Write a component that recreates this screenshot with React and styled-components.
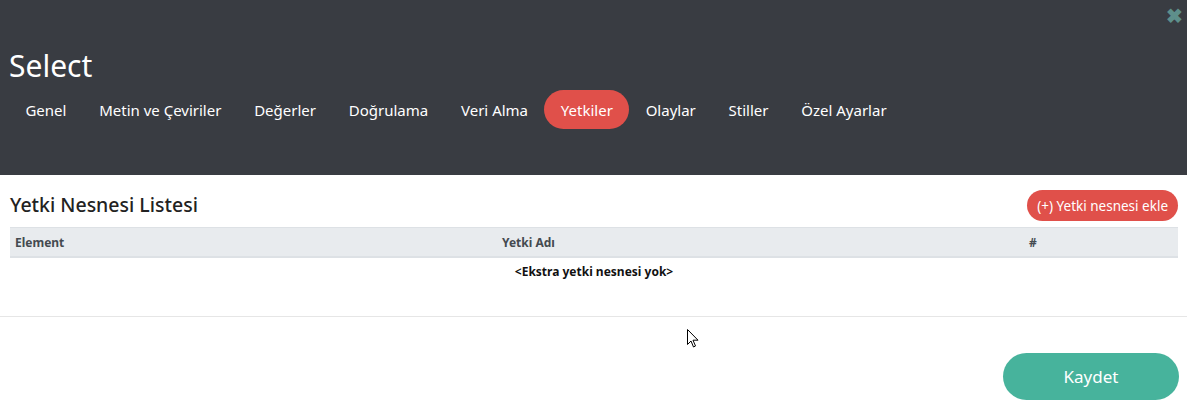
import styled, { createGlobalStyle } from "styled-components";

const Global = createGlobalStyle`
  html, body {
    margin: 0;
    padding: 0;
    background: #ffffff;
    font-family: "Noto Sans", "Open Sans", sans-serif;
  }
`;

const Page = styled.div`
  width: 1187px;
  height: 408px;
  display: flex;
  flex-direction: column;
  position: relative;
  overflow: hidden;
`;

const Header = styled.div`
  background-color: #393c42;
  height: 175px;
  box-sizing: border-box;
  padding: 46px 9px 0;
  position: relative;
`;

const Close = styled.span`
  position: absolute;
  top: 6px;
  right: 4px;
  color: #5e8f8b;
  font-size: 20px;
  font-weight: 700;
  line-height: 20px;
`;

const Title = styled.h1`
  margin: 0;
  color: #ffffff;
  font-weight: 400;
  font-size: 30px;
  line-height: 40px;
`;

const Tabs = styled.div`
  display: flex;
  margin-top: 4px;
`;

const Tab = styled.div`
  height: 39px;
  padding: 0 16.4px;
  display: flex;
  align-items: center;
  border-radius: 20px;
  font-size: 15px;
  color: #ffffff;
  background-color: ${(p) => (p.$active ? "#e0504a" : "transparent")};
`;

const Body = styled.div`
  padding: 17px 9px 0 10px;
  border-bottom: 1px solid #e6e6e6;
  height: 142px;
  box-sizing: border-box;
`;

const TopRow = styled.div`
  display: flex;
  justify-content: space-between;
  align-items: center;
  margin-bottom: 6px;
`;

const ListTitle = styled.h2`
  margin: 0 0 4px;
  font-size: 19.5px;
  font-weight: 500;
  color: #222;
  line-height: 24px;
`;

const AddButton = styled.button`
  border: none;
  background-color: #e0504a;
  color: #fff;
  border-radius: 16px;
  height: 31px;
  padding: 0 10px;
  font-family: inherit;
  font-size: 13.5px;
  margin-top: -2px;
`;

const Table = styled.table`
  width: 100%;
  border-collapse: collapse;
  table-layout: fixed;
  font-size: 12px;
`;

const Th = styled.th`
  text-align: left;
  background-color: #e8ebee;
  color: #444a50;
  font-weight: 700;
  height: 28px;
  padding: 0 5px;
  border-top: 1px solid #dde1e5;
  border-bottom: 2px solid #dde1e5;
  width: ${(p) => p.$w || "auto"};
`;

const Td = styled.td`
  text-align: center;
  font-weight: 700;
  color: #111;
  padding: 5px;
`;

const Footer = styled.div`
  display: flex;
  justify-content: flex-end;
  padding: 36px 8px 0;
`;

const SaveButton = styled.button`
  width: 176px;
  height: 47px;
  border: none;
  border-radius: 24px;
  background-color: #47b39c;
  color: #fff;
  font-family: inherit;
  font-size: 17px;
`;

const Cursor = styled.svg`
  position: absolute;
  left: 687px;
  top: 329px;
`;

const tabs = [
  "Genel",
  "Metin ve Çeviriler",
  "Değerler",
  "Doğrulama",
  "Veri Alma",
  "Yetkiler",
  "Olaylar",
  "Stiller",
  "Özel Ayarlar",
];

export default function App() {
  return (
    <Page>
      <Global />
      <Header>
        <Close>✖</Close>
        <Title>Select</Title>
        <Tabs>
          {tabs.map((t) => (
            <Tab key={t} $active={t === "Yetkiler"}>
              {t}
            </Tab>
          ))}
        </Tabs>
      </Header>
      <Body>
        <TopRow>
          <ListTitle>Yetki Nesnesi Listesi</ListTitle>
          <AddButton>(+) Yetki nesnesi ekle</AddButton>
        </TopRow>
        <Table>
          <thead>
            <tr>
              <Th $w="477px">Element</Th>
              <Th $w="517px">Yetki Adı</Th>
              <Th>#</Th>
            </tr>
          </thead>
          <tbody>
            <tr>
              <Td colSpan={3}>&lt;Ekstra yetki nesnesi yok&gt;</Td>
            </tr>
          </tbody>
        </Table>
      </Body>
      <Footer>
        <SaveButton>Kaydet</SaveButton>
      </Footer>
      <Cursor width="12" height="19" viewBox="0 0 12 19">
        <path d="M0.5 0.5 L0.5 15.5 L4 12 L6.5 18 L8.5 17 L6 11.2 L11 11.2 Z" fill="#fff" stroke="#000" strokeWidth="1" />
      </Cursor>
    </Page>
  );
}
